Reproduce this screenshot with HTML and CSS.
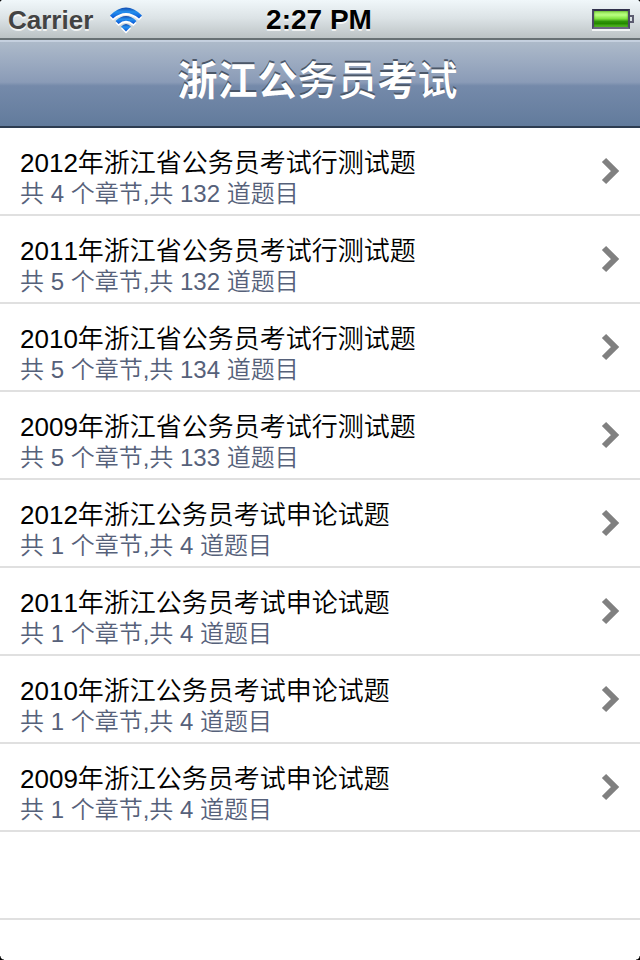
FILE: index.html
```html
<!DOCTYPE html>
<html lang="zh-CN">
<head>
<meta charset="utf-8">
<title>浙江公务员考试</title>
<link rel="stylesheet" href="styles.css">
</head>
<body>
<div class="screen">
  <header class="status">
    <div class="carrier"><span>Carrier</span>
      <svg class="wifi" width="34" height="27" viewBox="0 0 34 27">
        <defs><linearGradient id="blue" x1="0" y1="0" x2="0" y2="1"><stop offset="0" stop-color="#1148ad"/><stop offset=".4" stop-color="#2490ee"/><stop offset="1" stop-color="#0a54d4"/></linearGradient></defs>
        <g fill="#fff" transform="translate(0 2)"><path d="M1 8.500Q17-7.500 33 8.500L30 11.500Q17 .5 4 11.500Z"/><path d="M6.500 14Q17 4 27.500 14L24.500 17Q17 10.500 9.500 17Z"/><path d="M12 19.500Q17 14.500 22 19.500L17 24.500Z"/></g>
        <g fill="url(#blue)"><path d="M1 8.500Q17-7.500 33 8.500L30 11.500Q17 .5 4 11.500Z"/><path d="M6.500 14Q17 4 27.500 14L24.500 17Q17 10.500 9.500 17Z"/><path d="M12 19.500Q17 14.500 22 19.500L17 24.500Z"/></g>
      </svg>
    </div>
    <div class="time">2:27 PM</div>
    <div class="power"><i class="battery"></i><i class="tip"></i></div>
  </header>
  <nav class="navbar"><h1><b>浙江公</b>务员<b>考</b>试</h1></nav>
  <ul class="list">
    <li><div><h2>2012年浙江省公务员考试行测试题</h2><p>共 4 个章节,共 132 道题目</p></div><svg class="chevron" viewBox="0 0 20 28"><path d="M3 3L14 14L3 25"/></svg></li>
    <li><div><h2>2011年浙江省公务员考试行测试题</h2><p>共 5 个章节,共 132 道题目</p></div><svg class="chevron" viewBox="0 0 20 28"><path d="M3 3L14 14L3 25"/></svg></li>
    <li><div><h2>2010年浙江省公务员考试行测试题</h2><p>共 5 个章节,共 134 道题目</p></div><svg class="chevron" viewBox="0 0 20 28"><path d="M3 3L14 14L3 25"/></svg></li>
    <li><div><h2>2009年浙江省公务员考试行测试题</h2><p>共 5 个章节,共 133 道题目</p></div><svg class="chevron" viewBox="0 0 20 28"><path d="M3 3L14 14L3 25"/></svg></li>
    <li><div><h2>2012年浙江公务员考试申论试题</h2><p>共 1 个章节,共 4 道题目</p></div><svg class="chevron" viewBox="0 0 20 28"><path d="M3 3L14 14L3 25"/></svg></li>
    <li><div><h2>2011年浙江公务员考试申论试题</h2><p>共 1 个章节,共 4 道题目</p></div><svg class="chevron" viewBox="0 0 20 28"><path d="M3 3L14 14L3 25"/></svg></li>
    <li><div><h2>2010年浙江公务员考试申论试题</h2><p>共 1 个章节,共 4 道题目</p></div><svg class="chevron" viewBox="0 0 20 28"><path d="M3 3L14 14L3 25"/></svg></li>
    <li><div><h2>2009年浙江公务员考试申论试题</h2><p>共 1 个章节,共 4 道题目</p></div><svg class="chevron" viewBox="0 0 20 28"><path d="M3 3L14 14L3 25"/></svg></li>
    <li></li>
  </ul>
  <i class="corner tl"></i><i class="corner tr"></i><i class="corner bl"></i><i class="corner br"></i>
</div>
</body>
</html>
```
FILE: styles.css
```css
* { box-sizing: border-box; }
body, h1, h2, p, ul { margin: 0; padding: 0; }
body { font-family: "Liberation Sans", "Noto Sans CJK SC", sans-serif; font-kerning: none; background: #fff; }
.screen { position: relative; width: 640px; height: 960px; overflow: hidden; }
.status { height: 40px; display: grid; grid-template-columns: 1fr auto 1fr; align-items: center; padding: 0 6px 0 8px; background: linear-gradient(#f0f7fa, #dce3e6 18px, #bcc3c5 38px, #687174 38px, #687174); font-weight: bold; text-shadow: 0 2px 0 rgba(255,255,255,.75); }
.carrier { display: flex; align-items: center; gap: 16px; font-size: 26px; color: #434343; line-height: 40px; }
.wifi { display: block; }
.time { font-size: 28px; line-height: 38px; color: #000; margin-left: -4px; }
.power { display: flex; align-items: center; justify-content: flex-end; }
.battery { width: 38px; height: 20px; margin-top: -2px; border: 2px solid #4a4965; border-top-color: #30304c; border-bottom-color: #696680; background: linear-gradient(#8de14e, #baff82 25%, #81e43f 48%, #2f950b 65%, #248800 78%, #5bc52c); box-shadow: inset 0 0 2px #398215, 0 2px 0 #f2f5f6; }
.tip { width: 4px; height: 8px; margin-top: -2px; border: 2px solid #5c5c70; border-left: 0; }
.navbar { height: 88px; padding-right: 5px; background: linear-gradient(#c5d0df 0 2px, #adbaca 2px, #8a9bb7 48%, #758aaa 52%, #627b9c 86px, #2d3c50 86px); text-align: center; }
.navbar h1 { font-size: 40px; line-height: 82px; font-weight: 500; color: #fff; text-shadow: 0 -2px 0 #4b5768; }
.navbar b { font-weight: 700; }
.list { list-style: none; }
.list li { height: 88px; border-bottom: 2px solid #e0e0e0; padding: 18px 20px 0; display: flex; justify-content: space-between; }
.list h2 { font-size: 26px; line-height: 34px; font-weight: 350; color: #000; }
.list p { font-size: 24px; line-height: 28px; font-weight: 350; color: #56617a; }
.chevron { width: 20px; height: 28px; margin: 11px -1px 0 0; fill: none; stroke: #808080; stroke-width: 6; }
.corner { position: absolute; width: 4px; height: 4px; }
.tl { left: 0; top: 0; background: radial-gradient(circle at 100% 100%, transparent 4px, #000 5px); }
.tr { right: 0; top: 0; background: radial-gradient(circle at 0 100%, transparent 4px, #000 5px); }
.bl { left: 0; bottom: 0; background: radial-gradient(circle at 100% 0, transparent 3px, #000 4px); }
.br { right: 0; bottom: 0; background: radial-gradient(circle at 0 0, transparent 3px, #000 4px); }
```
